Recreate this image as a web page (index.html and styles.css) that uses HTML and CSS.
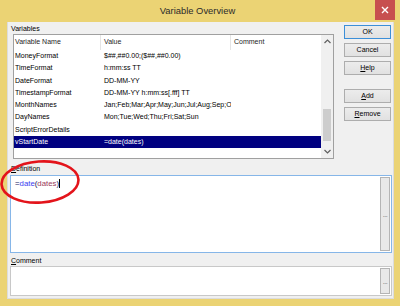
FILE: index.html
```html
<!DOCTYPE html>
<html>
<head>
<meta charset="utf-8">
<link rel="stylesheet" href="styles.css">
</head>
<body>
<div class="window">
  <div class="titlebar">
    <span class="title">Variable Overview</span>
    <div class="close"><svg width="8" height="8" viewBox="0 0 8 8"><path d="M1 1L7 7M7 1L1 7" stroke="#fff" stroke-width="1.4"/></svg></div>
  </div>
  <div class="client">
    <div class="top">
      <div class="vars">
        <div class="label lbl-vars">Variables</div>
        <div class="listbox">
          <div class="table">
            <div class="row header">
              <div class="cell c1">Variable Name</div>
              <div class="cell c2">Value</div>
              <div class="cell c3">Comment</div>
            </div>
            <div class="row"><div class="cell c1">MoneyFormat</div><div class="cell c2">$##,##0.00;($##,##0.00)</div><div class="cell c3"></div></div>
            <div class="row"><div class="cell c1">TimeFormat</div><div class="cell c2">h:mm:ss TT</div><div class="cell c3"></div></div>
            <div class="row"><div class="cell c1">DateFormat</div><div class="cell c2">DD-MM-YY</div><div class="cell c3"></div></div>
            <div class="row"><div class="cell c1">TimestampFormat</div><div class="cell c2">DD-MM-YY h:mm:ss[.fff] TT</div><div class="cell c3"></div></div>
            <div class="row"><div class="cell c1">MonthNames</div><div class="cell c2">Jan;Feb;Mar;Apr;May;Jun;Jul;Aug;Sep;Oct;Nov;Dec</div><div class="cell c3"></div></div>
            <div class="row"><div class="cell c1">DayNames</div><div class="cell c2">Mon;Tue;Wed;Thu;Fri;Sat;Sun</div><div class="cell c3"></div></div>
            <div class="row"><div class="cell c1">ScriptErrorDetails</div><div class="cell c2"></div><div class="cell c3"></div></div>
            <div class="row selected"><div class="cell c1">vStartDate</div><div class="cell c2">=date(dates)</div><div class="cell c3"></div></div>
          </div>
          <div class="scrollbar">
            <div class="arrow"><svg width="7" height="5" viewBox="0 0 7 5"><path d="M0.5 4L3.5 1L6.5 4" fill="none" stroke="#606060" stroke-width="1.2"/></svg></div>
            <div class="track"><div class="thumb"></div></div>
            <div class="arrow"><svg width="7" height="5" viewBox="0 0 7 5"><path d="M0.5 1L3.5 4L6.5 1" fill="none" stroke="#606060" stroke-width="1.2"/></svg></div>
          </div>
        </div>
      </div>
      <div class="buttons">
        <div class="btn default">OK</div>
        <div class="btn">Cancel</div>
        <div class="btn"><u>H</u>elp</div>
        <div class="btn spaced"><u>A</u>dd</div>
        <div class="btn"><u>R</u>emove</div>
      </div>
    </div>
    <div class="label lbl-def"><u>D</u>efinition</div>
    <div class="textbox focused def">
      <div class="content"><span class="op">=</span><span class="fn">date</span><span class="op">(</span><span class="var">dates</span><span class="op">)</span><span class="caret"></span></div>
      <div class="ellipsis">...</div>
    </div>
    <div class="label lbl-com"><u>C</u>omment</div>
    <div class="textbox com">
      <div class="content"></div>
      <div class="ellipsis">...</div>
    </div>
  </div>
  <svg class="annotation" width="400" height="306" viewBox="0 0 400 306">
    <ellipse cx="40" cy="182" rx="38.5" ry="20.5" transform="rotate(-4 40 182)" fill="none" stroke="#e3141b" stroke-width="2.6"/>
  </svg>
</div>
</body>
</html>
```
FILE: styles.css
```css
* { box-sizing: border-box; }
html, body { margin: 0; padding: 0; }
body {
  width: 400px;
  height: 306px;
  overflow: hidden;
  font-family: "Liberation Sans", Arial, sans-serif;
  font-size: 7px;
  color: #000;
  background: #ebd374;
}
.window {
  position: relative;
  width: 400px;
  height: 306px;
  background: #ebd374;
  padding: 0 6px 7px 7px;
  display: flex;
  flex-direction: column;
}
.titlebar {
  height: 22px;
  display: flex;
  align-items: flex-start;
  justify-content: center;
  position: relative;
}
.title {
  font-size: 9.4px;
  color: #2b2b2b;
  line-height: 22px;
  margin-right: 6px;
}
.close {
  position: absolute;
  right: -1px;
  top: 0;
  width: 20px;
  height: 20px;
  background: #c74f4f;
  display: flex;
  align-items: center;
  justify-content: center;
}
.client {
  flex: 1;
  background: #f0f0f0;
  border: 1px solid #dcdcdc;
  border-top: none;
  padding: 1px 2px 0 1px;
  display: flex;
  flex-direction: column;
}
.top {
  display: flex;
  align-items: flex-start;
}
.vars {
  display: flex;
  flex-direction: column;
}
.label {
  height: 10px;
  line-height: 10px;
  padding-left: 2px;
  color: #000;
}
.lbl-vars { margin-top: 1px; }
.listbox {
  margin-left: 4px;
  width: 321px;
  height: 125px;
  border: 1px solid #a0a0a0;
  background: #fff;
  display: flex;
}
.table {
  width: 307px;
  display: flex;
  flex-direction: column;
  overflow: hidden;
}
.row {
  display: flex;
  height: 12.3px;
  line-height: 12.3px;
  white-space: nowrap;
}
.row.header {
  height: 15px;
  line-height: 14px;
  color: #1e1e1e;
}
.header .cell { border-right: 1px solid #e5e5e5; }
.header .c3 { border-right: none; }
.cell { overflow: hidden; }
.c1 { width: 87px; padding-left: 1px; }
.c2 { width: 130px; padding-left: 3px; }
.c3 { flex: 1; padding-left: 3px; }
.row.selected { background: #000080; color: #fff; }
.scrollbar {
  width: 12px;
  background: #f0f0f0;
  display: flex;
  flex-direction: column;
}
.arrow {
  height: 13px;
  display: flex;
  align-items: center;
  justify-content: center;
}
.track {
  flex: 1;
  display: flex;
  flex-direction: column;
  justify-content: flex-end;
  padding: 0 2px;
}
.thumb {
  height: 32px;
  margin-bottom: 4px;
  background: #cdcdcd;
}
.buttons {
  margin-left: 10px;
  margin-top: 2px;
  display: flex;
  flex-direction: column;
  gap: 4px;
}
.btn {
  width: 47px;
  height: 14px;
  line-height: 12px;
  text-align: center;
  background: linear-gradient(#ececec, #e1e1e1);
  border: 1px solid #adadad;
  color: #000;
}
.btn.default { border-color: #3c8fd8; }
.btn.spaced { margin-top: 10px; }
.lbl-def { margin-top: 5px; padding-left: 2px; }
.lbl-com { margin-top: 2px; height: 11px; line-height: 11px; }
.textbox {
  width: 382px;
  margin-left: 1px;
  background: #fff;
  border: 1px solid #c8c8c8;
  padding: 1px;
  display: flex;
}
.textbox.def { height: 78px; margin-top: 1px; }
.textbox.com { height: 30px; }
.textbox.focused { border-color: #86b6e8; }
.content {
  flex: 1;
  padding: 2px 0 0 3px;
  font-size: 7.8px;
  line-height: 10px;
}
.op { color: #101060; }
.fn { color: #3c3cf0; }
.var { color: #9a3a5a; }
.caret {
  display: inline-block;
  width: 1px;
  height: 9px;
  background: #000;
  vertical-align: -2px;
}
.ellipsis {
  width: 10px;
  background: #e8e8e8;
  border: 1px solid #b4b4b4;
  color: #707070;
  font-size: 7px;
  display: flex;
  align-items: center;
  justify-content: center;
  letter-spacing: -0.5px;
}
.annotation {
  position: absolute;
  left: 0;
  top: 0;
  pointer-events: none;
}
```
